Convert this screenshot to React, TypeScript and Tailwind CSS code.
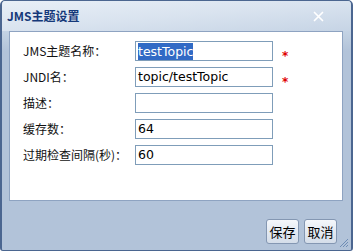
const CJK = "font-['Noto_Sans_CJK_SC','DejaVu_Sans',sans-serif]";

interface Field {
  label: string;
  value: string;
  required?: boolean;
  selected?: boolean;
}

const FIELDS: Field[] = [
  { label: 'JMS主题名称：', value: 'testTopic', required: true, selected: true },
  { label: 'JNDI名：', value: 'topic/testTopic', required: true },
  { label: '描述：', value: '' },
  { label: '缓存数：', value: '64' },
  { label: '过期检查间隔(秒)：', value: '60' },
];

function CloseIcon() {
  return (
    <svg width="11" height="11" viewBox="0 0 11 11" className="shrink-0">
      <path d="M1.5 1.5 L9.5 9.5 M9.5 1.5 L1.5 9.5" stroke="#ffffff" strokeWidth="1.7" strokeLinecap="round" />
    </svg>
  );
}

function Grip() {
  return (
    <svg width="12" height="12" viewBox="0 0 12 12" className="absolute bottom-[2px] right-[2px]">
      <path d="M11 3 L3 11 M11 6 L6 11 M11 9 L9 11" stroke="#6f8db5" strokeWidth="1" />
    </svg>
  );
}

function Button({ children }: { children: string }) {
  return (
    <button
      className={`${CJK} flex h-[25px] w-[33px] items-center justify-center rounded-[3px] border border-[#8497b2] bg-gradient-to-b from-[#f4f7fb] to-[#d4dde9] text-[13px] leading-none text-black`}
    >
      {children}
    </button>
  );
}

export default function App() {
  return (
    <div className="relative flex h-[251px] w-[353px] flex-col overflow-hidden rounded-t-[5px] rounded-b-[3px] border-x-2 border-b border-t border-[#4b6690] bg-[#b2c3d9]">
      {/* title bar */}
      <div className="flex h-[30px] shrink-0 items-center justify-between bg-gradient-to-br from-[#e8eff7] via-[#d9e3ef] to-[#c6d4e5] pl-[5px] pr-[27px]">
        <span className={`${CJK} text-[12px] font-bold text-[#15397a]`}>JMS主题设置</span>
        <CloseIcon />
      </div>

      <div className="flex flex-1 flex-col bg-gradient-to-b from-[#c4d3e4] to-[#b2c3d9] to-[20px] pl-[7px] pr-[8px]">
        {/* form panel */}
        <div className="flex h-[170px] flex-col gap-[6px] border border-[#8ea3c1] bg-white pl-[13px] pt-[9px]">
          {FIELDS.map((f) => (
            <div key={f.label} className="flex h-[20px] items-center">
              <span className={`${CJK} w-[112px] shrink-0 text-[12px] text-[#111]`}>{f.label}</span>
              <div className="flex h-[20px] w-[138px] items-center border border-[#7f9db9] bg-white px-[2px] font-['DejaVu_Sans',sans-serif] text-[12.5px] text-black">
                {f.selected ? (
                  <span className="bg-[#316ac5] leading-[17px] text-white">{f.value}</span>
                ) : (
                  <span>{f.value}</span>
                )}
              </div>
              {f.required && (
                <span className="ml-[9px] mt-[9px] font-['DejaVu_Sans',sans-serif] text-[12px] font-bold leading-none text-[#e00000]">*</span>
              )}
            </div>
          ))}
        </div>

        {/* footer */}
        <div className="flex flex-1 items-start justify-end gap-[5px] pr-[6px] pt-[18px]">
          <Button>保存</Button>
          <Button>取消</Button>
        </div>
      </div>
      <Grip />
    </div>
  );
}
